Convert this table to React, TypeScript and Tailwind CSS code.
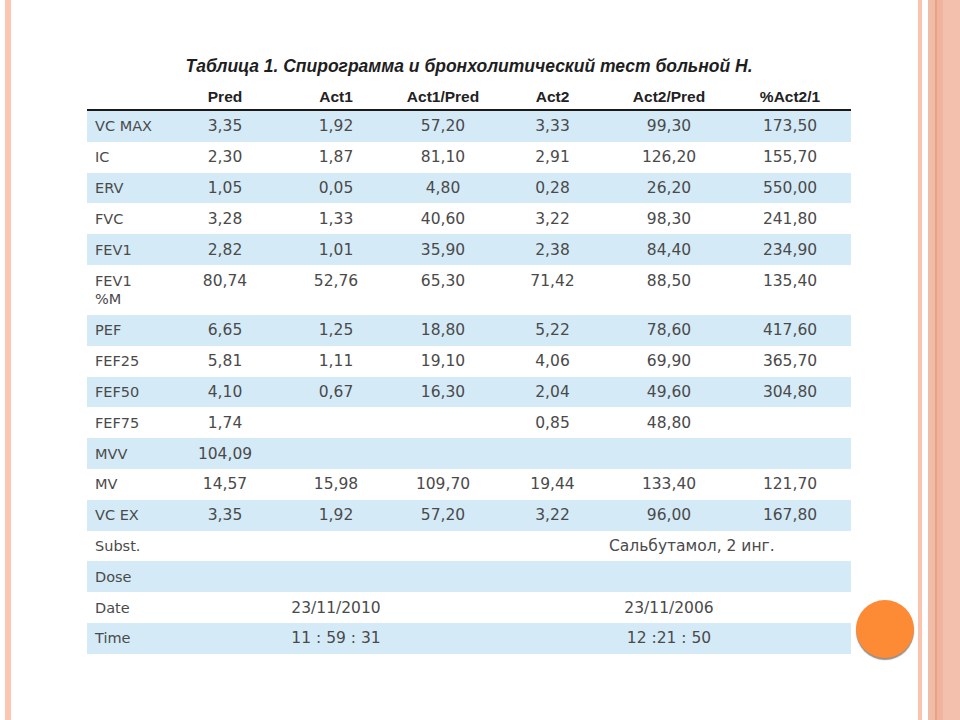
const rows: { label: string; vals: string[]; tall?: boolean }[] = [
  { label: "VC MAX", vals: ["3,35", "1,92", "57,20", "3,33", "99,30", "173,50"] },
  { label: "IC", vals: ["2,30", "1,87", "81,10", "2,91", "126,20", "155,70"] },
  { label: "ERV", vals: ["1,05", "0,05", "4,80", "0,28", "26,20", "550,00"] },
  { label: "FVC", vals: ["3,28", "1,33", "40,60", "3,22", "98,30", "241,80"] },
  { label: "FEV1", vals: ["2,82", "1,01", "35,90", "2,38", "84,40", "234,90"] },
  { label: "FEV1\n%M", vals: ["80,74", "52,76", "65,30", "71,42", "88,50", "135,40"], tall: true },
  { label: "PEF", vals: ["6,65", "1,25", "18,80", "5,22", "78,60", "417,60"] },
  { label: "FEF25", vals: ["5,81", "1,11", "19,10", "4,06", "69,90", "365,70"] },
  { label: "FEF50", vals: ["4,10", "0,67", "16,30", "2,04", "49,60", "304,80"] },
  { label: "FEF75", vals: ["1,74", "", "", "0,85", "48,80", ""] },
  { label: "MVV", vals: ["104,09", "", "", "", "", ""] },
  { label: "MV", vals: ["14,57", "15,98", "109,70", "19,44", "133,40", "121,70"] },
  { label: "VC EX", vals: ["3,35", "1,92", "57,20", "3,22", "96,00", "167,80"] },
  { label: "Subst.", vals: ["", "", "", "", "Сальбутамол, 2 инг.", ""] },
  { label: "Dose", vals: ["", "", "", "", "", ""] },
  { label: "Date", vals: ["", "23/11/2010", "", "", "23/11/2006", ""] },
  { label: "Time", vals: ["", "11 : 59 : 31", "", "", "12 :21 : 50", ""] },
];

const heads = ["Pred", "Act1", "Act1/Pred", "Act2", "Act2/Pred", "%Act2/1"];
const cols = "grid grid-cols-[81px_114px_108px_106px_113px_120px_122px]";

const App = () => {
  return (
    <div className="relative flex w-[960px] h-[720px] bg-white overflow-hidden">
      <div className="ml-[5px] w-[6px] h-full bg-[#fcc6b2]" />

      {/* slide content */}
      <div className="flex-1 pl-[76px] pt-[55px]">
        <div className="w-[764px]">
          <h2 className="text-center text-[17.5px] leading-[22px] font-bold italic text-[#1e1e1e] font-['Liberation_Sans',sans-serif]">
            Таблица 1. Спирограмма и бронхолитический тест больной Н.
          </h2>

          <div className={`${cols} mt-[8px] h-[26px] items-center border-b-2 border-[#1a1a1a] font-['Liberation_Sans',sans-serif] font-bold text-[15.5px] text-[#222]`}>
            <div />
            {heads.map((h) => (
              <div key={h} className="text-center">
                {h}
              </div>
            ))}
          </div>

          <div className="font-['DejaVu_Sans',sans-serif] text-[15.5px] text-[#4a4a4a]">
            {rows.map((r, i) => (
              <div
                key={r.label}
                className={`${cols} ${r.tall ? "h-[50px] items-start pt-[7px]" : "h-[30.8px] items-center"} ${i % 2 === 0 ? "bg-[#d5eaf7]" : "bg-white"}`}
              >
                <div className="pl-[8px] whitespace-pre leading-[18px] text-[14.5px]">{r.label}</div>
                {r.vals.map((v, j) => (
                  <div key={j} className="text-center whitespace-nowrap leading-[18px]">
                    {v}
                  </div>
                ))}
              </div>
            ))}
          </div>
        </div>
      </div>

      {/* right frame stripes */}
      <div className="w-[4px] h-full bg-[#f9c3ae]" />
      <div className="w-[6px] h-full bg-white" />
      <div className="flex w-[32px] h-full bg-[#f2bfab]">
        <div className="w-[7px] bg-[#efbca8]" />
        <div className="w-[2px] bg-[#eda083]" />
        <div className="w-[6px] bg-[#eeb49e]" />
        <div className="flex-1 bg-[#f3c0ad]" />
      </div>

      <div className="absolute left-[856px] top-[600px] w-[58px] h-[58px] rounded-full bg-[#fd8a35] shadow-[0_2px_1px_#9a8f86]" />
    </div>
  );
};

export default App;
